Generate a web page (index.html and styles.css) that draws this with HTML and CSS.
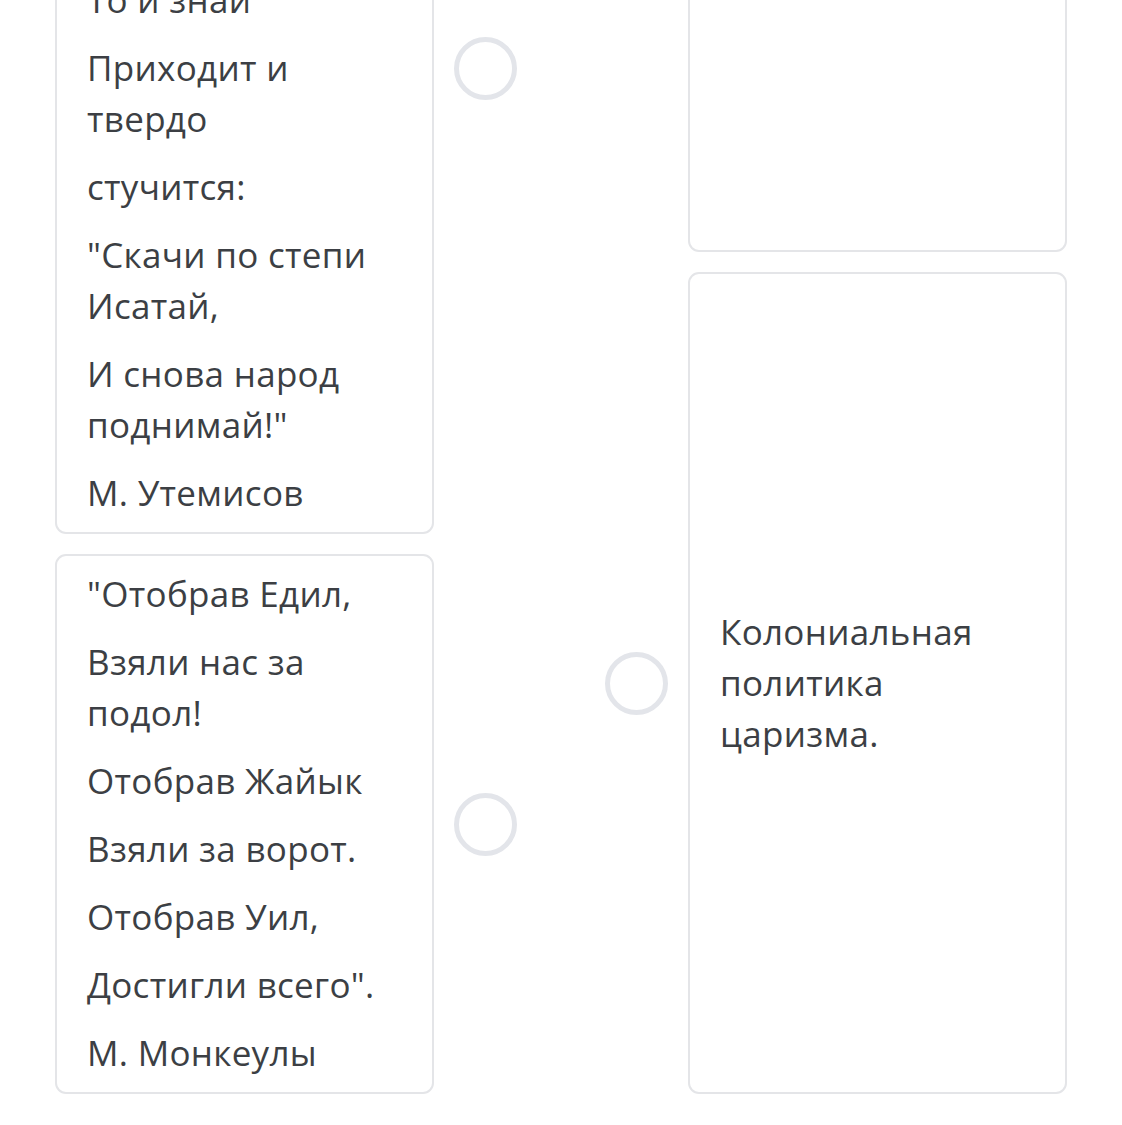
FILE: index.html
```html
<!DOCTYPE html>
<html lang="ru">
<head>
    <meta charset="UTF-8">
    <meta name="viewport" content="width=device-width, initial-scale=1.0">
    <title>Сопоставление</title>
    <link rel="stylesheet" href="styles.css">
</head>
<body>
    <div class="matching">
        <!-- Left column: quotes -->
        <div class="column">
            <div class="item">
                <div class="card">
                    <p>Если в полночь<br>конь заржёт,</p>
                    <p>Если ветер<br>в степи затих,</p>
                    <p>Если кто-то<br>у двери стоит,</p>
                    <p>То и знай</p>
                    <p>Приходит и твердо</p>
                    <p>стучится:</p>
                    <p>"Скачи по степи Исатай,</p>
                    <p>И снова народ поднимай!"</p>
                    <p>М. Утемисов</p>
                </div>
                <div class="dot"></div>
            </div>
            <div class="item">
                <div class="card">
                    <p>"Отобрав Едил,</p>
                    <p>Взяли нас за подол!</p>
                    <p>Отобрав Жайык</p>
                    <p>Взяли за ворот.</p>
                    <p>Отобрав Уил,</p>
                    <p>Достигли всего".</p>
                    <p>М. Монкеулы</p>
                </div>
                <div class="dot"></div>
            </div>
        </div>

        <!-- Right column: answers -->
        <div class="column">
            <div class="item item-first">
                <div class="dot"></div>
                <div class="card"></div>
            </div>
            <div class="item item-grow">
                <div class="dot"></div>
                <div class="card">
                    <p>Колониальная политика царизма.</p>
                </div>
            </div>
        </div>
    </div>
</body>
</html>
```

FILE: styles.css
```css
body {
    font-family: "Open Sans", "Noto Sans", sans-serif;
    margin: 0;
    padding: 0;
    background-color: #fff;
    color: #3c3f44;
}
.matching {
    display: grid;
    grid-template-columns: 462px 462px;
    column-gap: 88px;
    margin-top: -397px; /* page is scrolled down */
    padding-left: 55px;
}
.column {
    display: flex;
    flex-direction: column;
    gap: 20px;
}
.item {
    display: flex;
    align-items: center;
    gap: 20px;
}
.item-first {
    min-height: 649px;
}
.item-grow {
    flex: 1;
}
.item-first,
.item-grow {
    align-items: stretch;
}
.item-first .dot,
.item-grow .dot {
    align-self: center;
}
.card {
    flex: 1;
    display: flex;
    flex-direction: column;
    justify-content: center;
    gap: 17px;
    padding: 12px 30px 14px 30px;
    border: 2px solid #e4e5e8;
    border-radius: 11px;
    background-color: #fff;
    align-self: stretch;
}
.card p {
    margin: 0;
    font-size: 35px;
    line-height: 51px;
    letter-spacing: 0.3px;
}
.dot {
    flex: none;
    width: 63px;
    height: 63px;
    box-sizing: border-box;
    border: 5px solid #e3e5ea;
    border-radius: 50%;
}
```
